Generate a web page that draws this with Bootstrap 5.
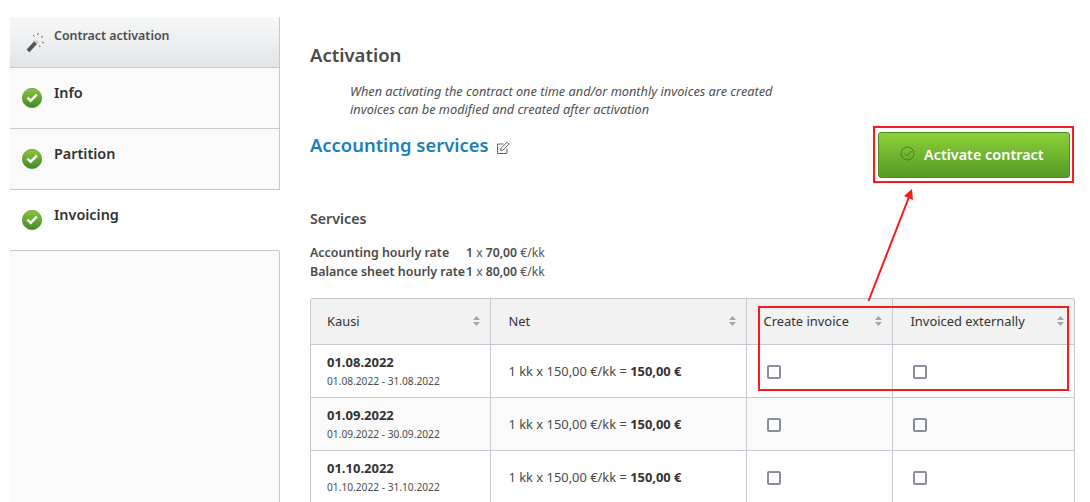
<!DOCTYPE html>
<html lang="en">
<head>
<meta charset="utf-8">
<title>Contract activation</title>
<link href="https://cdn.jsdelivr.net/npm/bootstrap@5.3.0/dist/css/bootstrap.min.css" rel="stylesheet">
<style>
html,body{height:502px;overflow:hidden;background:#fff}
body{font-family:"Noto Sans",sans-serif;font-size:13px;color:#4a4a4a;position:relative}
.shell{padding-left:10px;height:502px}
.sidebar{width:270px;height:502px;margin-top:17px;border-right:1px solid #c5c9d0;flex:none;background:#fafafa}
.side-head{height:51px;padding:10px 0 0 44px;background:linear-gradient(#f7f8f8,#e2e5e8);border-bottom:1px solid #c5c9d0;font-size:12.4px;font-weight:600;color:#4d4d4d;line-height:18px;position:relative}
.side-head svg{position:absolute;left:14px;top:14px}
.side-step{height:61px;border-bottom:1px solid #c5c9d0;background:#fafafa;padding:15px 0 0 44px;font-size:14.4px;font-weight:600;color:#333;line-height:20px;position:relative}
.side-step.on{background:#fff;border-right:1px solid #fff;margin-right:-1px}
.side-step svg{position:absolute;left:12px;top:20px}
.main-col{padding:0 15px 0 30px;min-width:0}
.title-main{font-size:18.5px;font-weight:600;color:#4a4a4a;line-height:24px;margin:43px 0 0}
.intro{font-size:12.75px;font-style:italic;color:#4f4f4f;line-height:18px;margin:15px 0 0 40px;width:460px}
.service-row{height:77px;margin-top:14px}
.service-title{font-size:18.4px;font-weight:600;color:#1d7fb8;line-height:24px;margin:0;padding-top:1px;gap:8px}
.service-title svg{margin-top:6px}
.btn-go{width:192px;height:46px;margin-right:5px;background:linear-gradient(#8cd038,#559b27);border:1px solid #4c8a24;border-radius:3px;color:#fff;font-size:14.4px;font-weight:600;padding:0 0 0 21px;gap:5px}
.btn-go:hover{color:#fff}
.btn-go svg{margin-bottom:3px}
.sub-title{font-size:14.2px;font-weight:600;color:#4a4a4a;line-height:20px;margin:0 0 14px}
.rates{font-size:12.2px;line-height:19px;color:#555;margin-bottom:17px}
.rates b{font-weight:600;color:#4a4a4a}
.rate-key{font-size:12.45px;width:156px;flex:none}
.tbl-wrap{border:1px solid #c5c9d0;border-bottom:0;border-radius:3px 3px 0 0;overflow:hidden}
.tbl{table-layout:fixed;width:764px;margin:0;border-collapse:collapse;font-size:12.9px}
.tbl th,.tbl td{border:1px solid #c5c9d0;padding:0 0 0 17px;vertical-align:middle;box-shadow:none;color:#4a4a4a;background:#fff}
.tbl tr>*:first-child{border-left:0;padding-left:16px}
.tbl tr>*:nth-child(2){padding-left:18px}
.tbl tr>*:last-child{border-right:0}
.tbl thead tr:first-child th{border-top:0}
.tbl th{background:#f2f2f2;height:45px;font-weight:400;color:#333;position:relative}
.tbl th:last-child{padding-left:18px}
.tbl td{height:53px;padding-top:2px}
.tbl td:first-child{padding-top:0}
.tbl tbody tr:nth-child(even) td{background:#fafafa}
.tbl .pad-box{padding-left:20px}
.sort{position:absolute;right:10px;top:17px}
.tbl th:last-child .sort{right:11px}
.day{font-weight:700;color:#333;line-height:18px;font-size:13px}
.span-sub{font-size:10.2px;color:#4d4d4d;line-height:16px;margin-top:2px}
.tbl td b{font-weight:700;color:#333}
.box{display:block;width:14px;height:14px;border:2px solid #8a8d9b;border-radius:2px;background:#fff;margin:0}
.overlay{position:absolute;left:0;top:0;pointer-events:none}
</style>
</head>
<body>
<svg width="0" height="0" class="d-block position-absolute">
  <defs>
    <linearGradient id="gg" x1="0" y1="0" x2="0" y2="1"><stop offset="0" stop-color="#8dc63f"/><stop offset="1" stop-color="#3d8b22"/></linearGradient>
    <g id="okc"><circle cx="10" cy="10" r="9.7" fill="url(#gg)" stroke="#4a8a2a" stroke-width=".6"/><path d="M4.5 10.500l1.800-1.800 2.400 2.300 5.200-5.300 1.800 1.800-7 7z" fill="#fff"/></g>
  </defs>
</svg>
<div class="shell d-flex">
  <aside class="sidebar">
    <div class="side-head">
      <svg width="24" height="24" viewBox="0 0 24 24" fill="none"><path d="M4 20 13 10" stroke="#555" stroke-width="4"/><path d="M11.500 11.500 13 10" stroke="#ddd" stroke-width="4"/><g stroke="#666" stroke-width="1"><path d="M9 4l1.500 1.500M14 2v2M19 5l-2 1.500M20 12l-2-1M16 16l-.5-1.500"/></g></svg>
      Contract activation
    </div>
    <div class="side-step"><svg width="20" height="20" viewBox="0 0 20 20"><use href="#okc"/></svg>Info</div>
    <div class="side-step"><svg width="20" height="20" viewBox="0 0 20 20"><use href="#okc"/></svg>Partition</div>
    <div class="side-step on"><svg width="20" height="20" viewBox="0 0 20 20"><use href="#okc"/></svg>Invoicing</div>
  </aside>
  <main class="main-col flex-grow-1">
    <h2 class="title-main">Activation</h2>
    <p class="intro">When activating the contract one time and/or monthly invoices are created invoices can be modified and created after activation</p>
    <div class="service-row d-flex justify-content-between align-items-start">
      <h3 class="service-title d-flex align-items-center">Accounting services
        <svg width="14" height="14" viewBox="0 0 14 14" fill="none" stroke="#666" stroke-width="1"><path d="M11 7.500V12.500H1.500V3H7.500"/><path d="M4.500 9.500l.6-2.500L11 1.200l1.900 1.900L7 9z"/></svg>
      </h3>
      <button type="button" class="btn btn-go d-flex align-items-center">
        <svg width="15" height="15" viewBox="0 0 15 15" fill="none" stroke="#4c7a2a" stroke-width="1"><circle cx="7.500" cy="7.500" r="6.500"/><path d="M4.500 7.500l2.300 2.300L11.500 5"/></svg>
        <span class="ms-1">Activate contract</span>
      </button>
    </div>
    <h4 class="sub-title">Services</h4>
    <div class="rates">
      <div class="d-flex"><b class="rate-key">Accounting hourly rate</b><span><b>1</b> x <b>70,00</b> €/kk</span></div>
      <div class="d-flex"><b class="rate-key">Balance sheet hourly rate</b><span><b>1</b> x <b>80,00</b> €/kk</span></div>
    </div>
    <div class="tbl-wrap">
      <table class="table tbl">
        <colgroup><col style="width:179px"><col style="width:256px"><col style="width:146px"><col style="width:183px"></colgroup>
        <thead><tr>
          <th>Kausi<svg class="sort" width="7" height="10" viewBox="0 0 7 10" fill="#9aa8b0"><path d="M3.500 0l3.500 4H0zM3.500 10l3.500-4H0z"/></svg></th>
          <th>Net<svg class="sort" width="7" height="10" viewBox="0 0 7 10" fill="#9aa8b0"><path d="M3.500 0l3.500 4H0zM3.500 10l3.500-4H0z"/></svg></th>
          <th>Create invoice<svg class="sort" width="7" height="10" viewBox="0 0 7 10" fill="#9aa8b0"><path d="M3.500 0l3.500 4H0zM3.500 10l3.500-4H0z"/></svg></th>
          <th>Invoiced externally<svg class="sort" width="7" height="10" viewBox="0 0 7 10" fill="#9aa8b0"><path d="M3.500 0l3.500 4H0zM3.500 10l3.500-4H0z"/></svg></th>
        </tr></thead>
        <tbody>
          <tr><td><div class="day">01.08.2022</div><div class="span-sub">01.08.2022 - 31.08.2022</div></td><td>1 kk x 150,00 €/kk = <b>150,00 €</b></td><td class="pad-box"><span class="box"></span></td><td class="pad-box"><span class="box"></span></td></tr>
          <tr><td><div class="day">01.09.2022</div><div class="span-sub">01.09.2022 - 30.09.2022</div></td><td>1 kk x 150,00 €/kk = <b>150,00 €</b></td><td class="pad-box"><span class="box"></span></td><td class="pad-box"><span class="box"></span></td></tr>
          <tr><td><div class="day">01.10.2022</div><div class="span-sub">01.10.2022 - 31.10.2022</div></td><td>1 kk x 150,00 €/kk = <b>150,00 €</b></td><td class="pad-box"><span class="box"></span></td><td class="pad-box"><span class="box"></span></td></tr>
        </tbody>
      </table>
    </div>
  </main>
</div>
<svg class="overlay" width="1090" height="502" fill="none" stroke="#f61c1c" stroke-width="2">
  <rect x="874" y="127" width="199" height="55"/>
  <rect x="759" y="307" width="309" height="83"/>
  <path d="M868.500 301 909 197"/>
  <path d="M912 189 904 196 913 200z" fill="#f61c1c" stroke="none"/>
</svg>
</body>
</html>
